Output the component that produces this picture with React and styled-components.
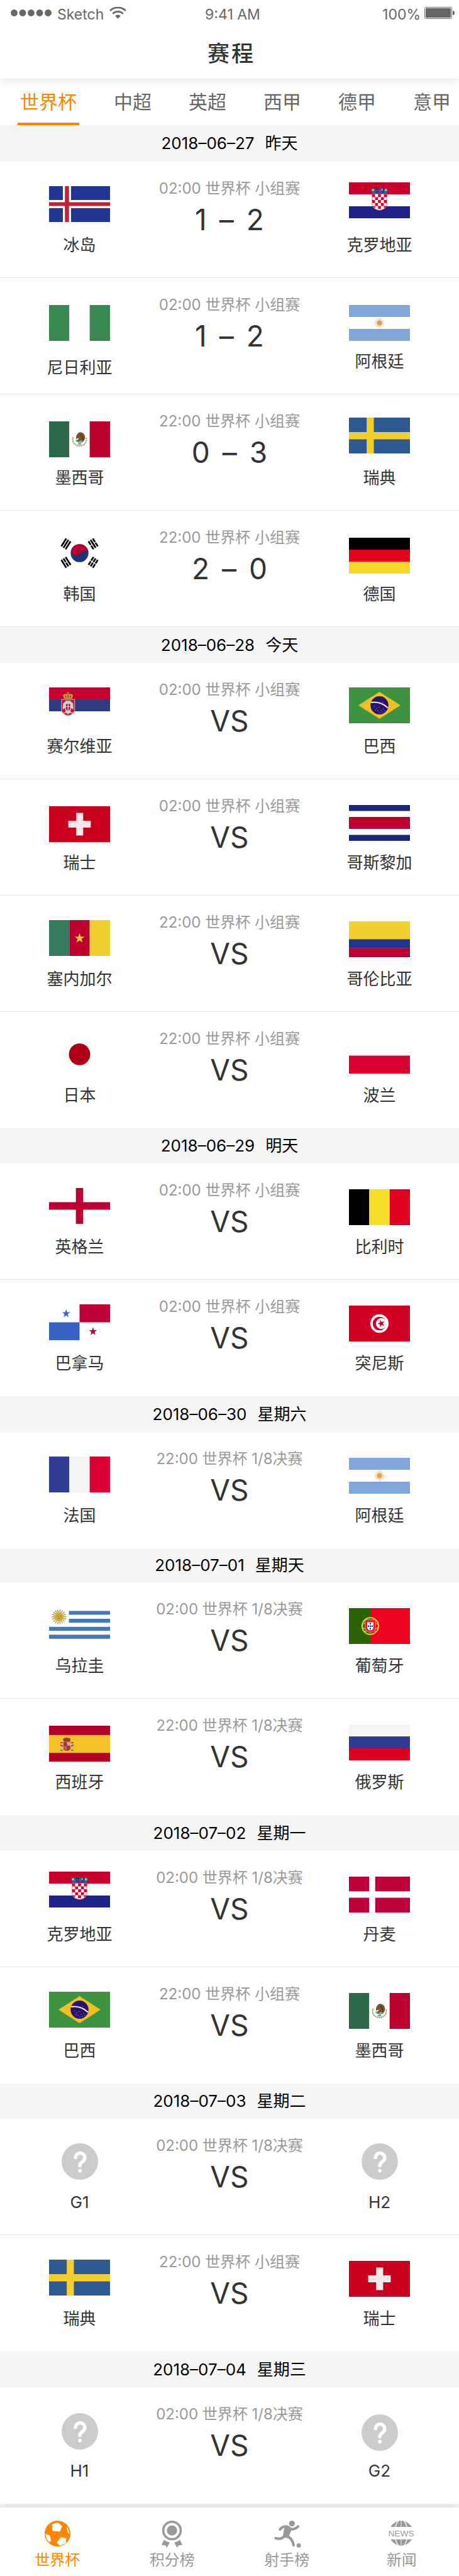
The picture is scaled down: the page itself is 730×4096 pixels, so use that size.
import React, { useState } from "react";
import styled, { createGlobalStyle, css } from "styled-components";

const color = {
  accent: "#ff8500",
  ink: "#333333",
  mid: "#666666",
  soft: "#999999",
  line: "#e4e4e4",
  band: "#f5f5f5",
};

const GlobalStyle = createGlobalStyle`
  *, *::before, *::after { box-sizing: border-box; }
  body {
    margin: 0;
    background: ${color.band};
    color: ${color.ink};
    font-family: Inter, "Noto Sans CJK SC", sans-serif;
  }
  button { font: inherit; }
`;

/* ---------- page frame ---------- */

const Header = styled.header`
  position: relative;
  z-index: 2;
  background: #fff;
  box-shadow: 0 4px 14px rgba(0, 0, 0, 0.11);
`;

const StatusBar = styled.div`
  display: grid;
  grid-template-columns: 1fr auto 1fr;
  align-items: center;
  height: 45px;
  padding: 0 7px 0 17px;
  color: ${color.mid};
  font-size: 23px;
  line-height: 28px;
`;

const StatusGroup = styled.div`
  display: flex;
  align-items: center;
  justify-content: ${(p) => (p.$end ? "flex-end" : "flex-start")};
  gap: ${(p) => (p.$end ? 6 : 9)}px;
`;

const StatusIcon = styled.svg`
  display: block;
  flex: none;
  margin-bottom: 4px;
`;

const Title = styled.h1`
  margin: 0;
  height: 80px;
  padding-left: 6px;
  font-size: 35px;
  font-weight: 500;
  line-height: 80px;
  letter-spacing: 3px;
  text-align: center;
`;

const Leagues = styled.nav`
  display: flex;
  gap: 51px;
  height: 74px;
  padding-left: 28px;
  overflow: hidden;
  background: #fff;
`;

const LeagueTab = styled.button`
  flex: none;
  padding: 4px 4px 0;
  border: 0;
  border-bottom: 4px solid ${(p) => (p.$active ? color.accent : "transparent")};
  background: none;
  color: ${(p) => (p.$active ? color.accent : color.mid)};
  font-size: 30px;
  line-height: 40px;
  cursor: pointer;
`;

const DayBand = styled.h2`
  display: flex;
  align-items: center;
  justify-content: center;
  gap: 17px;
  min-height: ${(p) => p.$height}px;
  margin: 0;
  background: ${color.band};
  color: #000;
  font-size: 26px;
  font-weight: 400;
  line-height: 36px;
`;

const MatchList = styled.ul`
  position: relative;
  z-index: 1;
  margin: 0;
  padding: 0;
  list-style: none;
  background: #fff;
`;

const MatchRow = styled.li`
  display: grid;
  grid-template-columns: 253px minmax(0, 1fr) 253px;
  min-height: 185px;
  border-bottom: 1px solid ${color.line};

  ${(p) =>
    !p.$ruled &&
    css`
      &:last-child { border-bottom-color: transparent; }
    `}
`;

const Team = styled.div`
  display: flex;
  flex-direction: column;
  align-items: center;
`;

const crestTop = { top: 33, raised: 37, left: 39, right: 41, low: 43 };

const Crest = styled.div`
  height: ${(p) => (p.$spacious ? 126 : 116)}px;
  padding-top: ${(p) => crestTop[p.$level]}px;

  svg { display: block; }
`;

const TeamName = styled.span`
  font-size: 26px;
  line-height: 34px;
`;

const Fixture = styled.div`
  display: flex;
  flex-direction: column;
  align-items: center;
  gap: 6px;
  padding-top: 27px;
`;

const Kickoff = styled.span`
  color: ${color.soft};
  font-size: 24px;
  line-height: 31px;
  white-space: nowrap;
`;

const Score = styled.strong`
  display: flex;
  gap: 20px;
  font-size: 46px;
  font-weight: 400;
  line-height: 56px;
  white-space: nowrap;
`;

const TabBar = styled.nav`
  display: grid;
  grid-template-columns: repeat(4, 1fr);
  margin-top: 6px;
  padding: 21px 0 9px;
  background: #fff;
  box-shadow: 0 -2px 12px rgba(0, 0, 0, 0.12);
`;

const TabLink = styled.a`
  display: flex;
  flex-direction: column;
  align-items: center;
  gap: 3px;
  color: ${(p) => (p.$active ? color.accent : color.soft)};
  font-size: 24px;
  line-height: 33px;
  text-decoration: none;

  svg {
    display: block;
    overflow: visible;
  }
`;

/* ---------- flags ---------- */

const FlagFrame = ({ children }) => (
  <svg width="97" height="57" viewBox="0 0 100 58" preserveAspectRatio="none" aria-hidden="true">
    {children}
  </svg>
);

const Vertical = ({ colors }) =>
  colors.map((c, i) => <rect key={i} x={(i * 100) / 3} width={100 / 3} height="58" fill={c} />);

const Horizontal = ({ colors }) =>
  colors.map((c, i) => <rect key={i} y={(i * 58) / 3} width="100" height={58 / 3} fill={c} />);

const starPoints = (cx, cy, r, turn = -90) =>
  Array.from({ length: 10 }, (_, i) => {
    const a = ((turn + i * 36) * Math.PI) / 180;
    const q = i % 2 ? r * 0.39 : r;
    return `${cx + q * Math.cos(a)},${cy + q * Math.sin(a)}`;
  }).join(" ");

const Sun = ({ cx, cy, r, rays, fill, core }) => (
  <g>
    {Array.from({ length: rays }, (_, i) => {
      const a = (i * 2 * Math.PI) / rays;
      return (
        <line
          key={i}
          x1={cx}
          y1={cy}
          x2={cx + r * Math.cos(a)}
          y2={cy + r * Math.sin(a)}
          stroke={fill}
          strokeWidth={r / 8}
        />
      );
    })}
    <circle cx={cx} cy={cy} r={r * 0.5} fill={core} />
  </g>
);

const Trigram = ({ x, y, turn, breaks }) => (
  <g transform={`translate(${x} ${y}) rotate(${turn})`}>
    {breaks.map((broken, i) => (
      <g key={i}>
        <rect x="-7.5" y={i * 4.2 - 5.6} width="15" height="2.8" fill="#000" />
        {broken && <rect x="-0.7" y={i * 4.2 - 6} width="1.4" height="3.6" fill="#fff" />}
      </g>
    ))}
  </g>
);

const flags = {
  iceland: (
    <>
      <rect width="100" height="58" fill="#213693" />
      <path d="M22.7 0h13.3v58H22.7zM0 22.5h100v13H0z" fill="#fff" />
      <path d="M26 0h6.7v58H26zM0 26h100v6H0z" fill="#c61e32" />
    </>
  ),
  croatia: (
    <>
      <Horizontal colors={["#c9002b", "#fff", "#1e2485"]} />
      <path d="M38 18.5h24V35c0 6-6 10-12 10s-12-4-12-10z" fill="#fff" stroke="#c9002b" strokeWidth="0.6" />
      <path
        d="M38 19h4.8v4.8H38zM47.6 19h4.8v4.8h-4.8zM57.2 19H62v4.8h-4.8zM42.8 23.8h4.8v4.8h-4.8zM52.4 23.8h4.8v4.8h-4.8zM38 28.6h4.8v4.8H38zM47.6 28.6h4.8v4.8h-4.8zM57.2 28.6H62v4.8h-4.8zM42.8 33.4h4.8v4.8h-4.8zM52.4 33.4h4.8v4.8h-4.8zM38.8 38.2h4v3.5c-2-1-3-2-4-3.5zM47.6 38.2h4.8v4.8h-4.8zM57.2 38.2h4c-1 1.5-2 2.5-4 3.5z"
        fill="#d4002c"
      />
      <path d="M38 18.5l-2.500-7.500 4-2 3.500 2 3.500-2.500 3.500 2 3.500-2 3.500 2.500 3.500-2 4 2-2.500 7.500q-12-3.500-24 0z" fill="#2c5fa3" />
      <path d="M43.500 10.500l3-2 3 2-.5 5.500-4.500.7zM55 9.500l3 1-1.500 6-3-.6z" fill="#22307f" />
      <circle cx="39.5" cy="12.5" r="1.7" fill="#e7c63a" />
      <circle cx="60.5" cy="12.5" r="1.7" fill="#e7c63a" />
      <path d="M45 13.600l3-.4M52.500 12.500l3.500.8" stroke="#c9485a" strokeWidth="1.4" />
      <circle cx="54.5" cy="11.8" r="1.1" fill="#e7c63a" />
    </>
  ),
  nigeria: <Vertical colors={["#398850", "#fff", "#398850"]} />,
  argentina: (
    <>
      <Horizontal colors={["#80a5d9", "#fff", "#80a5d9"]} />
      <Sun cx={50} cy={29} r={8} rays={20} fill="#ecc48f" core="#e2a149" />
    </>
  ),
  mexico: (
    <>
      <Vertical colors={["#2d6a4a", "#fff", "#bd002d"]} />
      <path d="M39.500 25.500c-3 9 4 14 10.500 14.300 6.500-.3 13.500-5.300 10.500-14.300" fill="none" stroke="#8c9c5c" strokeWidth="2" strokeDasharray="2.2 1" />
      <path d="M47 19.500c4-4 11-1 12 5 .5 4-1.500 7.500-4.500 9.500l-2-3-4 2.500-3-3.500c2 0 3.500-1 3-3l-4 1.500c-1-4 1-7 2.500-9z" fill="#7a5534" />
      <path d="M51 21c3 2 5 5 4.500 9.500" fill="none" stroke="#4c331f" strokeWidth="1.3" />
      <path d="M44 30.500c3 3 8 3.500 12 2" fill="none" stroke="#4b9f93" strokeWidth="2" />
      <path d="M46.500 35.500h7l-1.500 2.500h-4z" fill="#4fa6c9" />
      <path d="M49 33h3v3h-3z" fill="#d9a441" />
    </>
  ),
  sweden: (
    <>
      <rect width="100" height="58" fill="#2d5a93" />
      <path d="M29 0h11.700v58H29zM0 23.500h100V35H0z" fill="#f4cf30" />
    </>
  ),
  korea: (
    <>
      <rect width="100" height="58" fill="#fff" />
      <circle cx="50" cy="29" r="14.6" fill="#1e3478" />
      <path d="M35.900 25.200A14.600 14.600 0 0 1 64.500 27.500C63.500 24.500 57 24 53 27.500C49 31.500 46.500 34 41.500 32C37.500 30.500 36 28 35.900 25.200z" fill="#b80035" />
      <Trigram x={27.7} y={14} turn={-57} breaks={[false, false, false]} />
      <Trigram x={72.3} y={14} turn={57} breaks={[true, false, true]} />
      <Trigram x={27.7} y={44} turn={57} breaks={[false, true, false]} />
      <Trigram x={72.3} y={44} turn={-57} breaks={[true, true, true]} />
    </>
  ),
  germany: <Horizontal colors={["#000", "#e3001b", "#f6d928"]} />,
  serbia: (
    <>
      <Horizontal colors={["#c9002f", "#303c80", "#fff"]} />
      <path d="M20.500 19.500h21.500v17c0 5-5 9-10.700 9s-10.800-4-10.800-9z" fill="#c4163a" stroke="#e5dfe2" strokeWidth="0.8" />
      <path d="M31.200 22l-3-1-2 2.500-3 2-1 10 4-2 1 5-2 3h4l2 2.500 2-2.500h4l-2-3 1-5 4 2-1-10-3-2-2-2.500z" fill="#cfcfcf" />
      <path d="M27.700 27h7v7c0 2-2 3.500-3.500 3.500s-3.500-1.500-3.500-3.500z" fill="#c4163a" />
      <path d="M31.200 27.500v9.500M28 31h6.500" stroke="#fff" strokeWidth="1" />
      <path d="M23 40l3 2.500M39.500 40l-3 2.500" stroke="#e0b23b" strokeWidth="1.6" />
      <path d="M25 18.500l-2-5c0-3 5-4 8.200-2.500 3.200-1.500 8.200-.5 8.200 2.500l-2 5z" fill="#c49a2e" />
      <path d="M27 13.500l1 3M35.500 13.500l-1 3M31.200 12.500v4" stroke="#7c1d22" strokeWidth="1.2" />
      <path d="M31.200 7.500v3.500M29.700 9h3" stroke="#c49a2e" strokeWidth="1.2" />
    </>
  ),
  brazil: (
    <>
      <rect width="100" height="58" fill="#3e9340" />
      <path d="M15.500 29L50 7l34.500 22L50 51z" fill="#edc123" />
      <circle cx="50" cy="29" r="14.7" fill="#2c116c" />
      <path d="M36.200 24.300C46 22.800 56.500 26.300 63.800 33" fill="none" stroke="#e4efe6" strokeWidth="2.2" />
      <path d="M41 31h1M45 34h1M49 32h1M52 37h1M47 38h1M56 35h1M43 37h1M54 40h1M58 38h1M50 41h1M55 24h1" stroke="#d8d4e6" strokeWidth="1" />
    </>
  ),
  switzerland: (
    <>
      <rect width="100" height="58" fill="#c8001d" />
      <path d="M44.500 10.700H56v36.700H44.500zM31.600 23.300h36.800v11.400H31.600z" fill="#f8e6ea" />
    </>
  ),
  costaRica: (
    <>
      <rect width="100" height="58" fill="#fff" />
      <path d="M0 0h100v9.700H0zM0 48.300h100V58H0z" fill="#1b277d" />
      <rect y="19.3" width="100" height="19.4" fill="#bd002d" />
    </>
  ),
  cameroon: (
    <>
      <Vertical colors={["#357b5d", "#bd002d", "#f4cf30"]} />
      <polygon points={starPoints(50, 29.5, 8.5)} fill="#f4cf30" />
    </>
  ),
  colombia: (
    <>
      <rect width="100" height="58" fill="#f4cf30" />
      <rect y="29" width="100" height="14.5" fill="#21348b" />
      <rect y="43.5" width="100" height="14.5" fill="#bd002d" />
    </>
  ),
  japan: (
    <>
      <rect width="100" height="58" fill="#fff" />
      <circle cx="50" cy="29" r="17.5" fill="#ae0016" />
    </>
  ),
  poland: (
    <>
      <rect width="100" height="58" fill="#fff" />
      <rect y="29" width="100" height="29" fill="#d9002f" />
    </>
  ),
  england: (
    <>
      <rect width="100" height="58" fill="#fff" />
      <path d="M44 0h12v58H44zM0 23h100v12H0z" fill="#bd0032" />
    </>
  ),
  belgium: <Vertical colors={["#000", "#f7de2b", "#de001d"]} />,
  panama: (
    <>
      <rect width="100" height="58" fill="#fff" />
      <rect x="50" width="50" height="29" fill="#c00039" />
      <rect y="29" width="50" height="29" fill="#3763c3" />
      <polygon points={starPoints(28, 15, 7)} fill="#3763c3" />
      <polygon points={starPoints(72, 44, 7)} fill="#c00039" />
    </>
  ),
  tunisia: (
    <>
      <rect width="100" height="58" fill="#d10023" />
      <circle cx="50" cy="29" r="15" fill="#fff" />
      <circle cx="50" cy="29" r="11" fill="#d10023" />
      <circle cx="53" cy="29" r="8.8" fill="#fff" />
      <polygon points={starPoints(53, 29, 6.5, 180)} fill="#d10023" />
    </>
  ),
  france: <Vertical colors={["#303c94", "#f3f3f3", "#da0030"]} />,
  uruguay: (
    <>
      <rect width="100" height="58" fill="#fff" />
      <path d="M32.500 6.500H100v6.300H32.500zM32.500 19.300H100v6.500H32.500zM0 32.200h100v6.500H0zM0 45.100h100v6.500H0z" fill="#4277bb" />
      <Sun cx={16.3} cy={16} r={12} rays={18} fill="#b0963a" core="#cda72c" />
      <path d="M14 15h1.500M17.500 15h1.500M14.500 18.500h4" stroke="#8a6f20" strokeWidth="0.9" />
    </>
  ),
  portugal: (
    <>
      <rect width="100" height="58" fill="#ed0020" />
      <rect width="35" height="58" fill="#2a630a" />
      <circle cx="35" cy="29" r="13.5" fill="none" stroke="#e5dc20" strokeWidth="2" />
      <ellipse cx="35" cy="29" rx="13.5" ry="6" fill="none" stroke="#e5dc20" strokeWidth="1.2" />
      <path d="M25 20c7 3 15 3 20 0M25 38c7-3 15-3 20 0" fill="none" stroke="#e5dc20" strokeWidth="1.2" />
      <path d="M26.500 19h17v12c0 5-4 8-8.500 8s-8.500-3-8.500-8z" fill="#e0162b" stroke="#f2d9d9" strokeWidth="0.7" />
      <path d="M30 23h10v8c0 3-2.500 5-5 5s-5-2-5-5z" fill="#fff" />
      <path d="M34 24h2v2.500h-2zM34 28h2v2.500h-2zM34 32h2v2.500h-2zM31 28h2v2.500h-2zM37 28h2v2.500h-2z" fill="#1c2c9a" />
    </>
  ),
  spain: (
    <>
      <rect width="100" height="58" fill="#b20027" />
      <rect y="15" width="100" height="29" fill="#f3c229" />
      <path d="M23.500 26h11.500v10c0 3-3 4.500-5.800 4.500s-5.700-1.500-5.700-4.500z" fill="#a8323a" />
      <path d="M29.300 26.500H35v6h-5.700z" fill="#cfa0b5" />
      <path d="M23.500 33h5.500v6c-3-.5-5.500-1.500-5.500-6z" fill="#c9682c" />
      <circle cx="29.2" cy="32.5" r="1.6" fill="#4c5fa8" />
      <path d="M24 25.500l-1-4c2-2.500 10-2.500 12.300 0l-1 4z" fill="#9c3a2c" />
      <path d="M29.200 19v3" stroke="#9c3a2c" strokeWidth="1.3" />
      <path d="M20.500 27v12M38 27v12" stroke="#c9b7a6" strokeWidth="2.2" />
      <path d="M18.500 31l4 2M40 31l-4 2M18.500 27.500h4M36 27.500h4" stroke="#b3202e" strokeWidth="1.6" />
      <path d="M18.500 39.500h4M36 39.500h4" stroke="#6d6a86" strokeWidth="1.8" />
    </>
  ),
  russia: <Horizontal colors={["#f3f3f3", "#303c94", "#db001b"]} />,
  denmark: (
    <>
      <rect width="100" height="58" fill="#bd0037" />
      <path d="M33 0h10v58H33zM0 23.700h100V34H0z" fill="#fff" />
    </>
  ),
};

const Undecided = () => (
  <svg width="58" height="58" viewBox="0 0 60 60" aria-hidden="true">
    <circle cx="30" cy="30" r="30" fill="#cbcbcb" />
    <path
      d="M22.800 25.800v-1.800a7.700 8 0 0 1 15.400 0c0 6.500-8.200 6.500-8.200 12.500v2.500"
      fill="none"
      stroke="#fff"
      strokeWidth="5.6"
    />
    <circle cx="30.2" cy="45" r="3" fill="#fff" />
  </svg>
);

/* ---------- tab bar icons ---------- */

const BallIcon = () => (
  <svg width="43" height="43" viewBox="0 0 44 44" aria-hidden="true">
    <circle cx="22" cy="21" r="21" fill="currentColor" />
    <path
      d="M13 6l9.700-3 7 6-4 9-12-1.500zM2.600 21.500l6.400 2 2.700 8.500-2.700 3.500-3.500-3.500c-1.500-3-2.500-6-2.900-10.500zM37 9.700c2.500 3.500 4 7.500 4.400 11.800l-2-1-2.200-6zM27 27l9.300 1.300-.8 8c-3 2.500-6 3.700-10.200 4.200l-4.600-4.800z"
      fill="#fff"
    />
  </svg>
);

const MedalIcon = () => (
  <svg width="43" height="43" viewBox="0 0 44 44" aria-hidden="true">
    <circle cx="22" cy="16" r="14.2" fill="none" stroke="currentColor" strokeWidth="3.7" />
    <circle cx="22" cy="16" r="8.3" fill="currentColor" />
    <path
      d="M9.300 31.300q4 3.500 9 4.200L13.700 44l-2.400-3.500-6.300-1zM34.700 31.300q-4 3.500-9 4.200L30.300 44l2.400-3.500 6.300-1z"
      fill="currentColor"
    />
  </svg>
);

const StrikerIcon = () => (
  <svg width="43" height="43" viewBox="0 0 44 44" aria-hidden="true">
    <circle cx="30" cy="4.7" r="4.7" fill="currentColor" />
    <circle cx="41" cy="40.3" r="3.5" fill="currentColor" />
    <g fill="none" stroke="currentColor" strokeLinecap="round" strokeLinejoin="round" strokeWidth="4.2">
      <path d="M10.500 14.500q3.500-5.500 11-5 2.500.5 6 3.500 5 3 12.500-3.500" />
      <path d="M3.500 28.500q9 3 14.500-3.500" />
      <path d="M19 25.500q6.500.5 9.500 4.500 3 4 4.200 10" />
    </g>
    <path d="M19 10l9.500 4-5 12.500-7.500-.5z" fill="currentColor" stroke="currentColor" strokeLinejoin="round" strokeWidth="2" />
  </svg>
);

const NewsIcon = () => (
  <svg width="43" height="43" viewBox="0 0 44 44" aria-hidden="true">
    <path
      d="M4.300 10.300C8 4.500 14 0 21.500 0s13.500 4.500 17.200 10.300zM4.300 30.500h34.400C35 36.300 29 40.600 21.500 40.600S8 36.300 4.300 30.500z"
      fill="currentColor"
    />
    <ellipse cx="21.5" cy="20.3" rx="10.5" ry="22" fill="none" stroke="#fff" strokeWidth="1.4" />
    <path d="M21.500 0v10.300M21.500 30.500v10.200" stroke="#fff" strokeWidth="0.9" />
    <text
      x="21.5"
      y="25.5"
      textAnchor="middle"
      fill="currentColor"
      fontFamily="'Liberation Sans', sans-serif"
      fontSize="14"
    >
      NEWS
    </text>
  </svg>
);

/* ---------- schedule ---------- */

const GROUP = "小组赛";
const LAST16 = "1/8决赛";
const team = (name, flag, options = {}) => ({ name, flag, ...options });

const days = [
  {
    date: "2018–06–27", day: "昨天", band: 58, ruled: true,
    matches: [
      { time: "02:00", stage: GROUP, score: [1, 2], home: team("冰岛", "iceland"), away: team("克罗地亚", "croatia", { level: "top" }) },
      { time: "02:00", stage: GROUP, score: [1, 2], home: team("尼日利亚", "nigeria", { level: "low", spacious: true }), away: team("阿根廷", "argentina", { level: "low" }) },
      { time: "22:00", stage: GROUP, score: [0, 3], home: team("墨西哥", "mexico", { level: "low" }), away: team("瑞典", "sweden", { level: "raised" }) },
      { time: "22:00", stage: GROUP, score: [2, 0], home: team("韩国", "korea"), away: team("德国", "germany", { level: "low" }) },
    ],
  },
  {
    date: "2018–06–28", day: "今天", band: 57,
    matches: [
      { time: "02:00", stage: GROUP, home: team("赛尔维亚", "serbia"), away: team("巴西", "brazil", { level: "left" }) },
      { time: "02:00", stage: GROUP, home: team("瑞士", "switzerland", { level: "low" }), away: team("哥斯黎加", "costaRica") },
      { time: "22:00", stage: GROUP, home: team("塞内加尔", "cameroon"), away: team("哥伦比亚", "colombia") },
      { time: "22:00", stage: GROUP, home: team("日本", "japan"), away: team("波兰", "poland") },
    ],
  },
  {
    date: "2018–06–29", day: "明天", band: 56,
    matches: [
      { time: "02:00", stage: GROUP, home: team("英格兰", "england"), away: team("比利时", "belgium") },
      { time: "02:00", stage: GROUP, home: team("巴拿马", "panama"), away: team("突尼斯", "tunisia") },
    ],
  },
  {
    date: "2018–06–30", day: "星期六", band: 57,
    matches: [{ time: "22:00", stage: LAST16, home: team("法国", "france"), away: team("阿根廷", "argentina") }],
  },
  {
    date: "2018–07–01", day: "星期天", band: 54,
    matches: [
      { time: "02:00", stage: LAST16, home: team("乌拉圭", "uruguay"), away: team("葡萄牙", "portugal") },
      { time: "22:00", stage: LAST16, home: team("西班牙", "spain", { level: "low" }), away: team("俄罗斯", "russia") },
    ],
  },
  {
    date: "2018–07–02", day: "星期一", band: 57,
    matches: [
      { time: "02:00", stage: LAST16, home: team("克罗地亚", "croatia", { level: "top" }), away: team("丹麦", "denmark") },
      { time: "22:00", stage: GROUP, home: team("巴西", "brazil"), away: team("墨西哥", "mexico") },
    ],
  },
  {
    date: "2018–07–03", day: "星期二", band: 56,
    matches: [
      { time: "02:00", stage: LAST16, home: team("G1"), away: team("H2", null, { level: "left" }) },
      { time: "22:00", stage: GROUP, home: team("瑞典", "sweden"), away: team("瑞士", "switzerland") },
    ],
  },
  {
    date: "2018–07–04", day: "星期三", band: 57,
    matches: [{ time: "02:00", stage: LAST16, home: team("H1", null, { level: "right" }), away: team("G2", null, { level: "low" }) }],
  },
];

const leagues = ["世界杯", "中超", "英超", "西甲", "德甲", "意甲"];

const sections = [
  { label: "世界杯", Icon: BallIcon },
  { label: "积分榜", Icon: MedalIcon },
  { label: "射手榜", Icon: StrikerIcon },
  { label: "新闻", Icon: NewsIcon },
];

const Side = ({ data, side }) => (
  <Team>
    <Crest $level={data.level || side} $spacious={data.spacious}>
      {data.flag ? <FlagFrame>{flags[data.flag]}</FlagFrame> : <Undecided />}
    </Crest>
    <TeamName>{data.name}</TeamName>
  </Team>
);

const Match = ({ match, ruled }) => (
  <MatchRow $ruled={ruled}>
    <Side data={match.home} side="left" />
    <Fixture>
      <Kickoff>{`${match.time} 世界杯 ${match.stage}`}</Kickoff>
      {match.score ? (
        <Score>
          <span>{match.score[0]}</span>
          <span>–</span>
          <span>{match.score[1]}</span>
        </Score>
      ) : (
        <Score>VS</Score>
      )}
    </Fixture>
    <Side data={match.away} side="right" />
  </MatchRow>
);

export default function App() {
  const [league, setLeague] = useState(leagues[0]);

  return (
    <>
      <GlobalStyle />
      <Header>
        <StatusBar>
          <StatusGroup>
            <StatusIcon width="65" height="11" viewBox="0 0 65 11" fill="currentColor" aria-hidden="true">
              {[0, 1, 2, 3, 4].map((i) => (
                <circle key={i} cx={5.5 + i * 13.5} cy="5.5" r="5.4" />
              ))}
            </StatusIcon>
            <span>Sketch</span>
            <StatusIcon width="27" height="19" viewBox="0 0 27 19" aria-hidden="true">
              <g fill="none" stroke="currentColor" strokeWidth="2.6">
                <path d="M1 6.200a17.500 17.500 0 0 1 25 0" />
                <path d="M5.200 10.800a11.800 11.800 0 0 1 16.600 0" />
              </g>
              <path d="M9.200 14.200a6.200 6.200 0 0 1 8.600 0L13.500 18.800z" fill="currentColor" />
            </StatusIcon>
          </StatusGroup>
          <span>9:41 AM</span>
          <StatusGroup $end>
            <span>100%</span>
            <StatusIcon width="48" height="19" viewBox="0 0 48 19" aria-hidden="true">
              <rect x="0.5" y="0.5" width="43" height="18" rx="2" fill="none" stroke="currentColor" />
              <rect x="2" y="2" width="40" height="15" rx="1" fill="currentColor" />
              <path d="M45 6c2.500 0 3 1.500 3 3.500s-.5 3.500-3 3.500z" fill="currentColor" />
            </StatusIcon>
          </StatusGroup>
        </StatusBar>
        <Title>赛程</Title>
      </Header>

      <Leagues aria-label="联赛">
        {leagues.map((name) => (
          <LeagueTab
            key={name}
            type="button"
            $active={name === league}
            aria-pressed={name === league}
            onClick={() => setLeague(name)}
          >
            {name}
          </LeagueTab>
        ))}
      </Leagues>

      <main>
        {days.map((d) => (
          <section key={d.date}>
            <DayBand $height={d.band}>
              <span>{d.date}</span>
              <span>{d.day}</span>
            </DayBand>
            <MatchList>
              {d.matches.map((m, i) => (
                <Match key={i} match={m} ruled={d.ruled} />
              ))}
            </MatchList>
          </section>
        ))}
      </main>

      <TabBar aria-label="栏目">
        {sections.map(({ label, Icon }, i) => (
          <TabLink key={label} href={`#${i}`} $active={i === 0} aria-current={i === 0 ? "page" : undefined}>
            <Icon />
            {label}
          </TabLink>
        ))}
      </TabBar>
    </>
  );
}
